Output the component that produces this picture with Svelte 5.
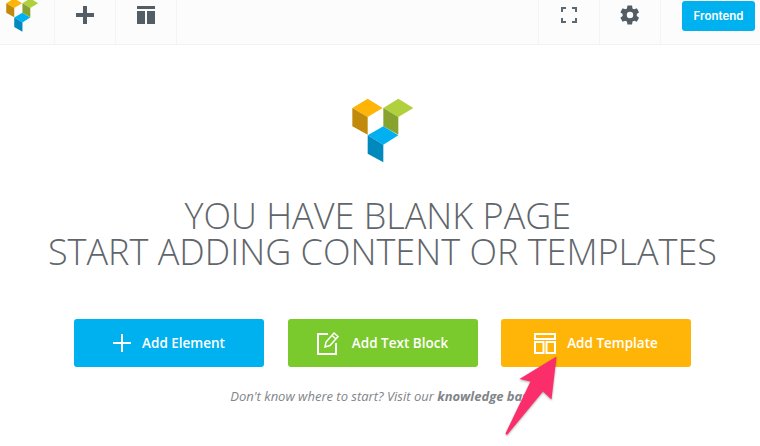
<script>
	const actions = [
		{ label: 'Add Element', kind: 'element' },
		{ label: 'Add Text Block', kind: 'text' },
		{ label: 'Add Template', kind: 'template' }
	];
</script>

{#snippet logo()}
	<path fill="#ffb508" d="M67 70 113 42 158 70 113 97z" />
	<path fill="#c28a0a" d="M67 70 113 97V150L67 125z" />
	<path fill="#b0d03d" d="M160 70 205 42 250 70 205 97z" />
	<path fill="#87a32e" d="M160 70 205 97V150L160 125z" />
	<path fill="#00b0f0" d="M113 152 160 125 205 152 160 180z" />
	<path fill="#0089bd" d="M113 152 160 180V233L113 207z" />
{/snippet}

<div class="page">
	<nav>
		<div class="brand">
			<svg width="34" height="34" viewBox="60 40 195 195">{@render logo()}</svg>
		</div>
		<button class="tool" aria-label="Add">
			<svg width="18" height="18" viewBox="0 0 18 18"><path fill="#525d65" d="M7 0h4v7h7v4h-7v7H7v-7H0V7h7z" /></svg>
		</button>
		<button class="tool" aria-label="Templates">
			<svg width="18" height="18" viewBox="0 0 18 18"><path fill="#525d65" d="M0 0h18v3H0zM0 5h8v13H0zM10 5h8v13h-8z" /></svg>
		</button>
		<div class="tool last"></div>
		<div class="spacer"></div>
		<button class="tool" aria-label="Fullscreen">
			<svg width="16" height="16" viewBox="0 0 16 16" fill="none" stroke="#5d6870" stroke-width="2"><path d="M1 5V1h4M11 1h4v4M15 11v4h-4M5 15H1v-4" /></svg>
		</button>
		<button class="tool" aria-label="Settings">
			<svg width="22" height="22" viewBox="0 0 24 24"><path fill="#525d65" fill-rule="evenodd" d="M19.400 13a7.600 7.600 0 0 0 0-2l2.200-1.700a.5.500 0 0 0 .1-.7l-2.100-3.600a.5.500 0 0 0-.6-.2l-2.600 1a7.600 7.600 0 0 0-1.700-1l-.4-2.800a.5.500 0 0 0-.5-.4H9.600a.5.500 0 0 0-.5.400l-.4 2.800a7.600 7.600 0 0 0-1.700 1l-2.600-1a.5.500 0 0 0-.6.2L1.700 8.600a.5.500 0 0 0 .1.700L4 11a7.600 7.600 0 0 0 0 2l-2.200 1.700a.5.500 0 0 0-.1.700l2.100 3.600a.5.500 0 0 0 .6.200l2.600-1a7.600 7.600 0 0 0 1.700 1l.4 2.800a.5.500 0 0 0 .5.400h4.200a.5.500 0 0 0 .5-.4l.4-2.800a7.600 7.600 0 0 0 1.700-1l2.600 1a.5.500 0 0 0 .6-.2l2.100-3.600a.5.500 0 0 0-.1-.7zM12 15.500a3.500 3.500 0 1 1 0-7 3.500 3.500 0 0 1 0 7z" /></svg>
		</button>
		<div class="mode">
			<button class="frontend">Frontend</button>
		</div>
	</nav>

	<main>
		<svg class="hero" width="65" height="65" viewBox="60 40 195 195">{@render logo()}</svg>
		<h1>YOU HAVE BLANK PAGE&nbsp;<br />START ADDING CONTENT OR TEMPLATES</h1>
		<div class="actions">
			{#each actions as action}
				<button class="action {action.kind}">
					{#if action.kind === 'element'}
						<svg width="18" height="18" viewBox="0 0 18 18"><path fill="#fff" d="M8 0h2v8h8v2h-8v8H8v-8H0V8h8z" /></svg>
					{:else if action.kind === 'text'}
						<svg width="24" height="24" viewBox="0 0 24 24" fill="none" stroke="#fff" stroke-width="2"><path d="M11 3H1v20h18V12" /><path d="M8 16l1-5 8-9 4 3.500-8 9zM15 4.500l4 3.500" stroke-width="1.500" /></svg>
					{:else}
						<svg width="22" height="21" viewBox="0 0 22 21" fill="none" stroke="#fff" stroke-width="2"><path d="M1 1h20v5H1zM1 9h8.500v11H1zM12.500 9H21v11h-8.500z" /></svg>
					{/if}
					<span>{action.label}</span>
				</button>
			{/each}
		</div>
		<p class="hint">Don't know where to start? Visit our <b>knowledge base</b></p>
	</main>

	<svg class="arrow" width="70" height="90" viewBox="500 352 70 90">
		<path fill="#fb2d6b" d="M556.500 356.500 551.500 399.500 543 391.500 507 435 505.500 433.500 530.500 381.500 519.500 379z" />
	</svg>
</div>

<style>
	:global(body) {
		background: #fff;
	}

	.page {
		position: relative;
		width: 760px;
		height: 446px;
		overflow: hidden;
		font-family: 'Open Sans', sans-serif;
	}

	nav {
		display: flex;
		height: 44px;
		background: #fcfcfc;
		border-bottom: 1px solid #f1f2f2;
	}

	button {
		border: 0;
		padding: 0;
		font-family: inherit;
		cursor: pointer;
	}

	.brand {
		width: 54px;
		height: 32px;
		overflow: hidden;
		display: flex;
		justify-content: center;
		align-items: flex-end;
		box-sizing: border-box;
	}

	.brand svg {
		margin-left: -10px;
	}

	.tool {
		display: flex;
		align-items: center;
		justify-content: center;
		width: 61px;
		padding-bottom: 15px;
		background: none;
		border-left: 1px solid #f3f4f4;
		box-sizing: border-box;
	}

	.last {
		width: 1px;
		padding: 0;
	}

	.spacer {
		flex: 1;
	}

	.mode {
		width: 100px;
		box-sizing: border-box;
		border-left: 1px solid #f3f4f4;
		padding: 1px 5px 0 21px;
	}

	.frontend {
		display: block;
		width: 73px;
		height: 30px;
		border-radius: 3px;
		background: #00b1f0;
		color: #fff;
		font-family: 'Inter', sans-serif;
		font-size: 11.500px;
		font-weight: 600;
	}

	main {
		display: flex;
		flex-direction: column;
		align-items: center;
		padding: 53px 0 0 5px;
	}

	.hero {
		display: block;
	}

	h1 {
		margin: 35px 0 0;
		font-size: 36px;
		line-height: 36px;
		font-weight: 300;
		color: #5f666b;
		text-align: center;
		white-space: nowrap;
	}

	.actions {
		display: flex;
		gap: 23.500px;
		margin-top: 49px;
	}

	.action {
		display: flex;
		align-items: center;
		justify-content: center;
		gap: 11px;
		width: 190px;
		height: 48px;
		border-radius: 3px;
		color: #fff;
		font-size: 13.500px;
		font-weight: 600;
	}

	.element {
		background: #00b1f0;
	}

	.text {
		background: #7ac92d;
	}

	.template {
		background: #ffb508;
	}

	.hint {
		margin: 20px 0 0 1px;
		font-size: 13px;
		font-style: italic;
		color: #7f8589;
	}

	.arrow {
		position: absolute;
		left: 500px;
		top: 352px;
		filter: drop-shadow(0 1px 1px rgba(0, 0, 0, 0.35));
	}
</style>
